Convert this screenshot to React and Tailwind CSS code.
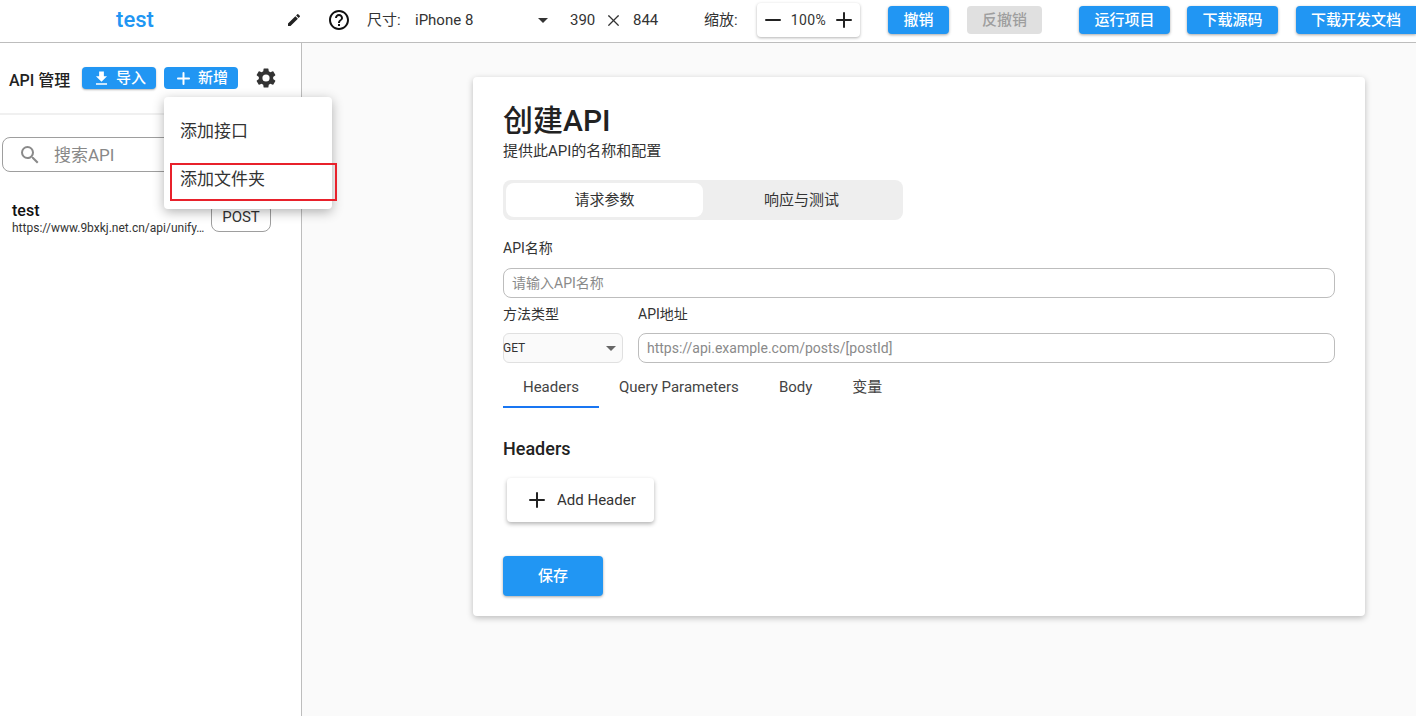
import React from "react";
import { Minus, Plus, X } from "lucide-react";

const font = { fontFamily: '"Roboto", "Noto Sans CJK SC", sans-serif' };

const BlueButton = ({ children, className = "" }) => (
  <button className={`h-7 rounded bg-[#2196f3] text-white text-[15px] font-medium shadow-[0_1px_3px_rgba(0,0,0,0.35)] flex items-center justify-center ${className}`}>
    {children}
  </button>
);

const TopBar = () => (
  <div className="h-[43px] shrink-0 border-b border-[#bdbdbd] bg-white flex items-center pb-[2px] text-[15px] text-[#333] whitespace-nowrap">
    <div className="w-[270px] text-center text-[#2196f3] text-[22px] font-medium leading-none">test</div>
    <svg viewBox="0 0 24 24" className="w-4 h-4 ml-4 fill-[#222]">
      <path d="M3 17.25V21h3.75L17.81 9.94l-3.75-3.75L3 17.25zM20.71 7.04a1 1 0 0 0 0-1.41l-2.34-2.34a1 1 0 0 0-1.41 0l-1.83 1.83 3.75 3.75 1.83-1.83z" />
    </svg>
    <svg viewBox="0 0 24 24" className="w-6 h-6 ml-[25px] fill-[#111]">
      <path d="M11 18h2v-2h-2v2zm1-16C6.48 2 2 6.48 2 12s4.48 10 10 10 10-4.48 10-10S17.52 2 12 2zm0 18c-4.41 0-8-3.59-8-8s3.59-8 8-8 8 3.59 8 8-3.59 8-8 8zm0-14c-2.21 0-4 1.79-4 4h2c0-1.1.9-2 2-2s2 .9 2 2c0 2-3 1.75-3 5h2c0-2.25 3-2.5 3-5 0-2.21-1.79-4-4-4z" />
    </svg>
    <span className="ml-[16px] w-[48px]">尺寸:</span>
    <div className="w-[135px] flex items-center justify-between pr-[2px]">
      <span>iPhone 8</span>
      <span className="w-0 h-0 border-x-[5px] border-x-transparent border-t-[5px] border-t-[#333]" />
    </div>
    <span className="ml-[20px] w-[25px]">390</span>
    <X className="w-[19px] h-[19px] ml-[9px] text-[#333]" strokeWidth={1.5} />
    <span className="ml-[10px] w-[26px]">844</span>
    <span className="ml-[45px] w-[33px]">缩放:</span>
    <div className="ml-[20px] w-[103px] h-[34px] rounded bg-white shadow-[0_1px_3px_rgba(0,0,0,0.3)] flex items-center justify-between px-[4px]">
      <Minus className="w-6 h-6 text-[#222]" strokeWidth={2} />
      <span className="text-sm tracking-[0.4px]">100%</span>
      <Plus className="w-6 h-6 text-[#222]" strokeWidth={2} />
    </div>
    <BlueButton className="ml-[28px] w-[61px]">撤销</BlueButton>
    <div className="ml-[18px] w-[75px] h-7 rounded bg-[#e0e0e0] text-[#9e9e9e] font-medium flex items-center justify-center">反撤销</div>
    <BlueButton className="ml-[37px] w-[91px]">运行项目</BlueButton>
    <BlueButton className="ml-[17px] w-[91px]">下载源码</BlueButton>
    <BlueButton className="ml-[18px] flex-1 rounded-r-none">下载开发文档</BlueButton>
  </div>
);

const Sidebar = () => (
  <div className="relative w-[302px] shrink-0 border-r border-[#bdbdbd] bg-white">
    <div className="h-[72px] border-b-2 border-[#f0f0f0] flex items-start pl-[9px] pt-[24px]">
      <span className="text-base font-medium text-[#222] leading-[26px] w-[73px] mt-[1px]">API 管理</span>
      <button className="w-[74px] h-[22px] rounded bg-[#2196f3] text-white text-[15px] font-medium flex items-center justify-center gap-[5px] shadow-[0_1px_2px_rgba(0,0,0,0.3)]">
        <svg viewBox="0 0 24 24" className="w-[19px] h-[19px] fill-white"><path d="M19 9h-4V3H9v6H5l7 7 7-7zM5 18v2h14v-2H5z" /></svg>
        导入
      </button>
      <button className="ml-2 w-[74px] h-[22px] rounded bg-[#2196f3] text-white text-[15px] font-medium flex items-center justify-center gap-[5px]">
        <Plus className="w-[19px] h-[19px]" strokeWidth={2.5} />
        新增
      </button>
      <svg viewBox="0 0 24 24" className="w-6 h-6 ml-[16px] -mt-px fill-[#333]">
        <path d="M19.14 12.94c.04-.3.06-.61.06-.94s-.02-.64-.07-.94l2.03-1.58a.49.49 0 0 0 .12-.61l-1.92-3.32a.49.49 0 0 0-.59-.22l-2.39.96c-.5-.38-1.03-.7-1.62-.94l-.36-2.54a.48.48 0 0 0-.48-.41h-3.84a.48.48 0 0 0-.47.41l-.36 2.54c-.59.24-1.13.57-1.62.94l-2.39-.96a.48.48 0 0 0-.59.22L2.74 8.87a.47.47 0 0 0 .12.61l2.03 1.58c-.05.3-.09.63-.09.94s.02.64.07.94l-2.03 1.58a.49.49 0 0 0-.12.61l1.92 3.32c.12.22.37.29.59.22l2.39-.96c.5.38 1.03.7 1.62.94l.36 2.54c.05.24.24.41.48.41h3.84c.24 0 .44-.17.47-.41l.36-2.54c.59-.24 1.13-.56 1.62-.94l2.39.96c.22.08.47 0 .59-.22l1.92-3.32a.47.47 0 0 0-.12-.61l-2.01-1.58zM12 15.6A3.6 3.6 0 1 1 12 8.4a3.6 3.6 0 0 1 0 7.2z" />
      </svg>
    </div>

    <div className="mt-[22px] ml-[2px] mr-[10px] h-[35px] rounded-lg border border-[#9e9e9e] flex items-center pl-[15px] text-[#888] text-[17px]">
      <svg viewBox="0 0 24 24" className="w-6 h-6 fill-[#8a8a8a]">
        <path d="M15.5 14h-.79l-.28-.27A6.47 6.47 0 0 0 16 9.5 6.5 6.5 0 1 0 9.5 16c1.61 0 3.09-.59 4.23-1.57l.27.28v.79l5 4.99L20.49 19l-4.99-5zm-6 0C7.01 14 5 11.99 5 9.5S7.01 5 9.5 5 14 7.01 14 9.5 11.99 14 9.5 14z" />
      </svg>
      <span className="ml-[12px] pt-[2px]">搜索API</span>
    </div>

    <div className="mt-[29px] pl-3 pr-[30px] flex items-start justify-between">
      <div className="w-[194px]">
        <div className="text-base font-medium text-[#111] leading-5">test</div>
        <div className="text-xs text-[#333] leading-[14px] whitespace-nowrap">https://www.9bxkj.net.cn/api/unify…</div>
      </div>
      <div className="w-[60px] h-[30px] mt-[1px] rounded-lg border border-[#9e9e9e] text-[15px] text-[#333] flex items-center justify-center">POST</div>
    </div>

    {/* open 新增 menu */}
    <div className="absolute left-[164px] top-[54px] w-[168px] h-[112px] bg-white rounded-sm shadow-[0_3px_12px_rgba(0,0,0,0.3)] pl-[16px] pt-[22px] text-[17px] text-[#333]">
      <div className="leading-6">添加接口</div>
      <div className="leading-6 mt-[24px]">添加文件夹</div>
    </div>
    <div className="absolute left-[170px] top-[120px] w-[167px] h-[38px] border-2 border-[#e8212b]" />
  </div>
);

const Field = ({ placeholder, className = "" }) => (
  <div className={`h-[30px] rounded-lg border border-[#bdbdbd] flex items-center pl-[8px] text-sm text-[#8a8a8a] ${className}`}>
    {placeholder}
  </div>
);

const ApiCard = () => (
  <div className="w-[892px] h-[539px] rounded bg-white shadow-[0_2px_6px_rgba(0,0,0,0.25)] pl-[30px] pr-[30px] pt-[26px]">
    <h1 className="text-[30px] font-medium text-[#222] leading-[36px]">创建API</h1>
    <p className="mt-[2px] text-[15px] text-[#333] leading-[20px]">提供此API的名称和配置</p>

    <div className="mt-[19px] w-[400px] h-10 rounded-lg bg-[#eeeeee] p-[3px] flex text-[15px] text-[#333]">
      <div className="w-[197px] rounded-lg bg-white flex items-center justify-center">请求参数</div>
      <div className="flex-1 flex items-center justify-center">响应与测试</div>
    </div>

    <div className="mt-[18px] text-sm text-[#333] leading-5">API名称</div>
    <Field placeholder="请输入API名称" className="mt-[10px] w-[832px]" />

    <div className="mt-[6px] flex gap-[15px] w-[832px]">
      <div className="w-[120px] shrink-0">
        <div className="text-sm text-[#333] leading-5">方法类型</div>
        <div className="mt-[9px] h-[30px] rounded-md border border-[#e0e0e0] bg-[#fafafa] flex items-center justify-between pr-[6px] text-xs text-[#333]">
          <span className="-ml-px">GET</span>
          <span className="w-0 h-0 border-x-[5px] border-x-transparent border-t-[5px] border-t-[#666]" />
        </div>
      </div>
      <div className="flex-1">
        <div className="text-sm text-[#333] leading-5">API地址</div>
        <Field placeholder="https://api.example.com/posts/[postId]" className="mt-[9px]" />
      </div>
    </div>

    <div className="mt-[2px] flex text-[15px] text-[#444] h-[43px]">
      <div className="w-[96px] border-b-2 border-[#1976f2] pt-[3px] flex items-center justify-center">Headers</div>
      <div className="ml-[20px] h-[43px] pt-[2px] flex items-center">Query Parameters</div>
      <div className="ml-[40px] h-[43px] pt-[2px] flex items-center">Body</div>
      <div className="ml-[40px] h-[43px] pt-[2px] flex items-center">变量</div>
    </div>

    <h2 className="mt-[29px] text-lg font-medium text-[#222] leading-6">Headers</h2>

    <button className="mt-[17px] ml-[4px] w-[147px] h-[44px] rounded bg-white shadow-[0_2px_4px_rgba(0,0,0,0.3)] flex items-center pl-[18px] text-[15px] text-[#333]">
      <Plus className="w-6 h-6 text-[#222]" strokeWidth={2} />
      <span className="ml-[8px]">Add Header</span>
    </button>

    <BlueButton className="mt-[34px] !h-10 w-[100px]">保存</BlueButton>
  </div>
);

export default function App() {
  return (
    <div className="h-[716px] w-[1416px] overflow-hidden flex flex-col bg-[#fafafa]" style={font}>
      <TopBar />
      <div className="flex-1 flex min-h-0">
        <Sidebar />
        <div className="flex-1 pl-[171px] pt-[34px]">
          <ApiCard />
        </div>
      </div>
    </div>
  );
}
